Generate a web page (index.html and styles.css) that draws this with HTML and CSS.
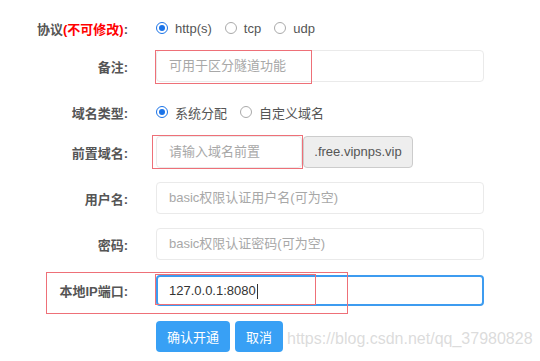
FILE: index.html
```html
<!DOCTYPE html>
<html lang="zh-CN">
<head>
    <meta charset="UTF-8">
    <title>新建隧道</title>
    <link rel="stylesheet" href="styles.css">
</head>
<body>
    <div class="form">
        <div class="row first">
            <label class="label">协议<span class="warn">(不可修改)</span>:</label>
            <div class="field radios">
                <span class="radio checked"></span><span class="opt">http(s)</span>
                <span class="radio"></span><span class="opt">tcp</span>
                <span class="radio"></span><span class="opt">udp</span>
            </div>
        </div>

        <div class="row near">
            <label class="label">备注:</label>
            <div class="field">
                <div class="input placeholder">可用于区分隧道功能</div>
                <span class="mark mark-remark"></span>
            </div>
        </div>

        <div class="row">
            <label class="label">域名类型:</label>
            <div class="field radios">
                <span class="radio checked"></span><span class="opt">系统分配</span>
                <span class="radio"></span><span class="opt">自定义域名</span>
            </div>
        </div>

        <div class="row close">
            <label class="label">前置域名:</label>
            <div class="field group">
                <div class="input placeholder prefix">请输入域名前置</div>
                <div class="addon">.free.vipnps.vip</div>
                <span class="mark mark-prefix"></span>
            </div>
        </div>

        <div class="row">
            <label class="label">用户名:</label>
            <div class="field">
                <div class="input placeholder">basic权限认证用户名(可为空)</div>
            </div>
        </div>

        <div class="row">
            <label class="label">密码:</label>
            <div class="field">
                <div class="input placeholder">basic权限认证密码(可为空)</div>
            </div>
        </div>

        <div class="row local">
            <label class="label">本地IP端口:</label>
            <div class="field">
                <div class="input focused">127.0.0.1:8080<span class="caret"></span></div>
                <span class="mark mark-ip"></span>
            </div>
            <span class="mark mark-row"></span>
        </div>

        <div class="row actions">
            <div class="field buttons">
                <button class="btn">确认开通</button>
                <button class="btn">取消</button>
            </div>
        </div>
    </div>
    <div class="watermark">https://blog.csdn.net/qq_37980828</div>
</body>
</html>
```

FILE: styles.css
```css
body {
    margin: 0;
    background: #fff;
    font-family: "Liberation Sans", Arial, "Noto Sans CJK SC", sans-serif;
    font-size: 13px;
    color: #606266;
    position: relative;
    width: 540px;
    height: 361px;
    overflow: hidden;
}

.form {
    padding-top: 12px;
}

.row {
    display: flex;
    align-items: center;
    height: 32px;
    margin-top: 14px;
    position: relative;
}

.row.first {
    margin-top: 0;
}

.row.near {
    margin-top: 6px;
}

.row.close {
    margin-top: 8px;
}

.label {
    width: 128px;
    text-align: right;
    font-weight: bold;
    color: #555;
    flex: none;
}

.warn {
    color: #f00;
}

.field {
    margin-left: 28px;
    width: 328px;
    height: 32px;
    position: relative;
    display: flex;
    align-items: center;
}

.actions .field {
    margin-left: 156px;
    height: 31px;
}

.radios {
    color: #555;
}

.radio {
    width: 10px;
    height: 10px;
    border: 1px solid #aaa;
    border-radius: 50%;
    box-sizing: content-box;
    margin-right: 7px;
    position: relative;
    flex: none;
}

.radio.checked {
    border-color: #1a73e8;
}

.radio.checked::after {
    content: "";
    position: absolute;
    left: 2px;
    top: 2px;
    width: 6px;
    height: 6px;
    border-radius: 50%;
    background: #1a73e8;
}

.opt {
    margin-right: 13px;
}

.input {
    box-sizing: border-box;
    width: 100%;
    height: 32px;
    border: 1px solid #eaeaea;
    border-radius: 4px;
    padding: 0 12px;
    line-height: 30px;
    color: #333;
    background: #fff;
}

.placeholder {
    color: #a8a8a8;
}

.group .prefix {
    width: 146px;
    flex: none;
}

.addon {
    box-sizing: border-box;
    height: 32px;
    width: 110px;
    margin-left: 1px;
    background: #eee;
    border: 1px solid #ccc;
    border-radius: 4px;
    line-height: 30px;
    text-align: center;
    color: #555;
    flex: none;
}

.input.focused {
    border: 2px solid #3d9cf0;
    line-height: 28px;
    padding-left: 11px;
    height: 31px;
}

.caret {
    display: inline-block;
    width: 1px;
    height: 15px;
    background: #333;
    vertical-align: middle;
    margin-left: 1px;
}

.mark {
    position: absolute;
    border: 1.5px solid #ee7078;
    box-sizing: border-box;
}

.mark-remark {
    left: -1px;
    top: 0;
    width: 157px;
    height: 34px;
}

.mark-prefix {
    left: -4px;
    top: -1px;
    width: 151px;
    height: 34px;
}

.mark-ip {
    left: -1px;
    top: 0;
    width: 161px;
    height: 31px;
}

.mark-row {
    left: 46px;
    top: -2px;
    width: 302px;
    height: 42px;
}

.buttons {
    gap: 5px;
}

.btn {
    height: 31px;
    border: none;
    border-radius: 4px;
    background: #38a0f5;
    color: #fff;
    font-family: inherit;
    font-size: 13px;
    padding: 0 11px;
    margin: 0;
}

.watermark {
    position: absolute;
    left: 287px;
    top: 330px;
    font-size: 16px;
    color: rgba(190, 190, 190, 0.55);
    white-space: nowrap;
}
```
